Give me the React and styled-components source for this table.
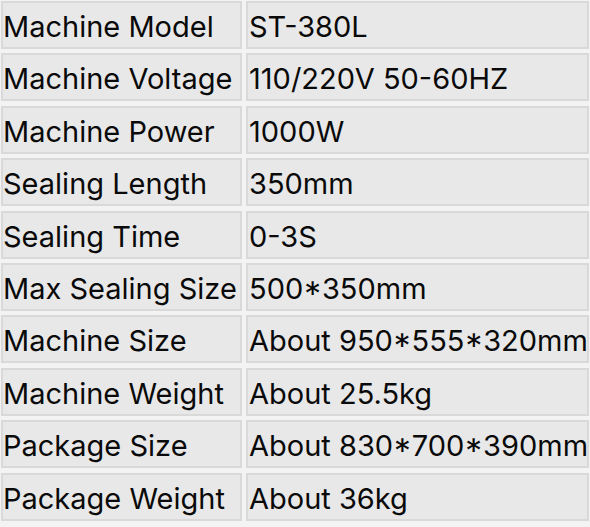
import React from "react";
import styled, { createGlobalStyle } from "styled-components";

const Global = createGlobalStyle`
  html, body { margin: 0; padding: 0; background: #f3f3f3; }
  body { font-family: Inter, "Noto Sans", sans-serif; overflow: hidden; }
`;

const Table = styled.div`
  display: grid;
  grid-template-columns: 241px 343px;
  column-gap: 4px;
  row-gap: 4.4px;
  padding: 1px 0 0 1px;
  background: #f3f3f3;
`;

const Cell = styled.div`
  box-sizing: border-box;
  height: 48px;
  background: #e8e8e8;
  border: 2px solid #d9d9d9;
  display: flex;
  align-items: center;
  padding: 3px 0 0 ${(p) => (p.$value ? "1px" : "0")};
  font-size: 29px;
  color: #0a0a0a;
  white-space: nowrap;
  overflow: visible;
`;

const rows = [
  ["Machine Model", "ST-380L"],
  ["Machine Voltage", "110/220V 50-60HZ"],
  ["Machine Power", "1000W"],
  ["Sealing Length", "350mm"],
  ["Sealing Time", "0-3S"],
  ["Max Sealing Size", "500*350mm"],
  ["Machine Size", "About 950*555*320mm"],
  ["Machine Weight", "About 25.5kg"],
  ["Package Size", "About 830*700*390mm"],
  ["Package Weight", "About 36kg"],
];

export default function App() {
  return (
    <>
      <Global />
      <Table>
        {rows.map(([k, v]) => (
          <React.Fragment key={k}>
            <Cell>{k}</Cell>
            <Cell $value>{v}</Cell>
          </React.Fragment>
        ))}
      </Table>
    </>
  );
}
